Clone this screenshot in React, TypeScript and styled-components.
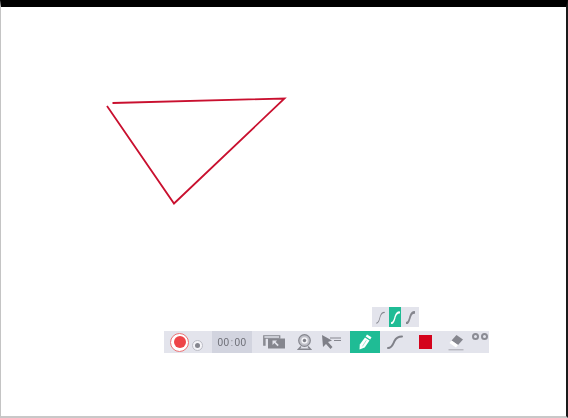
import React from 'react';
import styled, { createGlobalStyle } from 'styled-components';

const GlobalStyle = createGlobalStyle`
    html, body {
        margin: 0;
        padding: 0;
        background: #ffffff;
        overflow: hidden;
    }
`;

const Frame = styled.div`
    width: 568px;
    height: 418px;
    box-sizing: border-box;
    display: flex;
    flex-direction: column;
    background: #ffffff;
    border-top: 7px solid #000000;
    border-left: 1px solid #c4c4c4;
    border-right: 2px solid #1a1a1a;
    border-bottom: 2px solid #c8c8c8;
`;

// the capture is a scaled recording, everything in it is slightly soft
const Canvas = styled.div`
    position: relative;
    flex: 1;
    display: flex;
    flex-direction: column;
    justify-content: flex-end;
    align-items: flex-start;
    padding: 0 0 63px 163px;
    filter: blur(0.35px);
`;

const Drawing = styled.svg`
    position: absolute;
    left: -1px;
    top: -7px;
    width: 568px;
    height: 418px;
`;

const SubBar = styled.div`
    display: flex;
    height: 20px;
    width: 47px;
    margin-left: 208px;
    margin-bottom: 4px;
    background: #e3e4ec;
`;

const SubItem = styled.div<{ $active?: boolean; $width: number }>`
    width: ${(p) => p.$width}px;
    display: flex;
    align-items: center;
    justify-content: center;
    background: ${(p) => (p.$active ? '#1fbc95' : 'transparent')};
    color: ${(p) => (p.$active ? '#ffffff' : '#85868e')};
`;

const Toolbar = styled.div`
    display: flex;
    align-items: stretch;
    width: 325px;
    height: 22px;
    background: #e3e4ec;
`;

const RecordArea = styled.div`
    width: 48px;
    flex: none;
    display: flex;
    align-items: center;
    padding-left: 6px;
    box-sizing: border-box;
`;

const RecordRing = styled.div`
    width: 19px;
    height: 19px;
    box-sizing: border-box;
    border-radius: 50%;
    border: 1.5px solid #ec7477;
    background: #ffffff;
    display: flex;
    align-items: center;
    justify-content: center;
`;

const RecordDot = styled.div`
    width: 12px;
    height: 12px;
    border-radius: 50%;
    background: #ee4448;
`;

const SmallRing = styled.div`
    width: 11px;
    height: 11px;
    box-sizing: border-box;
    margin: 6px 0 0 3px;
    border-radius: 50%;
    border: 1px solid #bcbdc5;
    background: #f4f4f8;
    display: flex;
    align-items: center;
    justify-content: center;
`;

const SmallDot = styled.div`
    width: 5px;
    height: 5px;
    border-radius: 50%;
    background: #85868e;
`;

const Timer = styled.div`
    width: 40px;
    flex: none;
    display: flex;
    align-items: center;
    justify-content: center;
    background: #d2d4df;
    color: #6a6b73;
    font-family: 'Liberation Sans', Arial, sans-serif;
    font-size: 10px;
    letter-spacing: 0.4px;
`;

const Colon = styled.span`
    margin: 0 1px;
    color: #8d8e96;
`;

const Tool = styled.div<{ $width: number; $active?: boolean }>`
    width: ${(p) => p.$width}px;
    flex: none;
    display: flex;
    align-items: center;
    justify-content: center;
    background: ${(p) => (p.$active ? '#1fbc95' : 'transparent')};
    color: #7f8088;
`;

const Swatch = styled.div`
    width: 13px;
    height: 14px;
    background: #d4031c;
`;

const Dots = styled.div`
    display: flex;
    align-self: flex-start;
    gap: 2px;
    margin-top: 2px;
    margin-left: 1px;
`;

const Dot = styled.div`
    width: 7px;
    height: 7px;
    box-sizing: border-box;
    border-radius: 50%;
    border: 2px solid #8b8c94;
`;

const Curve = ({ width = 2, w = 16, h = 14 }: { width?: number; w?: number; h?: number }) => (
    <svg width={w} height={h} viewBox="0 0 16 14" fill="none" preserveAspectRatio="none">
        <path
            d="M1 13C5 13 6 9 7.5 6S11 1.5 15 1.5"
            stroke="currentColor"
            strokeWidth={width}
            strokeLinecap="round"
        />
    </svg>
);

const App: React.FC = () => (
    <>
        <GlobalStyle />
        <Frame>
            <Canvas>
                <Drawing viewBox="0 0 568 418" fill="none">
                    <path
                        d="M112.5 103L284.5 98.5L174 203.5L107 106"
                        stroke="#c9102f"
                        strokeWidth="1.8"
                    />
                </Drawing>
                <SubBar>
                    <SubItem $width={17}>
                        <Curve width={1.2} w={9} h={13} />
                    </SubItem>
                    <SubItem $width={12} $active>
                        <Curve width={2.2} w={9} h={13} />
                    </SubItem>
                    <SubItem $width={18}>
                        <Curve width={3} w={9} h={13} />
                    </SubItem>
                </SubBar>
                <Toolbar>
                    <RecordArea>
                        <RecordRing>
                            <RecordDot />
                        </RecordRing>
                        <SmallRing>
                            <SmallDot />
                        </SmallRing>
                    </RecordArea>
                    <Timer>
                        00<Colon>:</Colon>00
                    </Timer>
                    <Tool $width={44}>
                        <svg width="22" height="14" viewBox="0 0 22 14">
                            <path d="M.75.75h16v2.5H2v7H.75z" fill="#e3e4ec" stroke="#85868e" strokeWidth="1.2" />
                            <rect x="5" y="3.5" width="17" height="10" fill="#85868e" />
                            <path d="M9.5 5.5h4.5l-1.4 1.4 3.2 3-1.3 1.3-3.1-3.1-1.9 1.9z" fill="#e3e4ec" />
                        </svg>
                    </Tool>
                    <Tool $width={16}>
                        <svg width="15" height="16" viewBox="0 0 15 16">
                            <circle cx="7.5" cy="6.5" r="5.8" fill="#c0c1c9" stroke="#85868e" strokeWidth="1.2" />
                            <circle cx="7.5" cy="6.5" r="3.2" fill="#f2f2f6" />
                            <circle cx="7.5" cy="6.5" r="1.7" fill="#7f8088" />
                            <path d="M4 12.5L1.5 15.2h12L11 12.5" fill="none" stroke="#85868e" strokeWidth="1.4" />
                        </svg>
                    </Tool>
                    <Tool $width={38}>
                        <svg width="20" height="15" viewBox="0 0 20 15">
                            <path d="M1 0l10 5.5-4 1.5 4.5 5-2 2-4.5-5-3 3z" fill="#7f8088" />
                            <path d="M9 3h11M13 5.5h7" stroke="#85868e" strokeWidth="1" />
                        </svg>
                    </Tool>
                    <Tool $width={30} $active>
                        <svg width="14" height="16" viewBox="0 0 14 16">
                            <path d="M9 .5l4.5 2.8-1.3 2.1-4.5-2.8z" fill="#ffffff" />
                            <path d="M7 3.6l4.5 2.8-4.8 7.2-5.2 2 .3-5z" fill="#ffffff" />
                            <path d="M8.4 6.2L4.4 12.4" stroke="#8fdcc8" strokeWidth="0.8" />
                        </svg>
                    </Tool>
                    <Tool $width={30}>
                        <Curve width={2} />
                    </Tool>
                    <Tool $width={31}>
                        <Swatch />
                    </Tool>
                    <Tool $width={30}>
                        <svg width="16" height="17" viewBox="0 0 16 17">
                            <path d="M8.5 1L15 5.5 10 11 3.5 6.5z" fill="#85868e" />
                            <path d="M3.5 6.5L10 11 8 13.5 1.5 9z" fill="#ffffff" />
                            <path d="M.5 15.8h15" stroke="#a5a6ae" strokeWidth="1" />
                        </svg>
                    </Tool>
                    <Dots>
                        <Dot />
                        <Dot />
                    </Dots>
                </Toolbar>
            </Canvas>
        </Frame>
    </>
);

export default App;
